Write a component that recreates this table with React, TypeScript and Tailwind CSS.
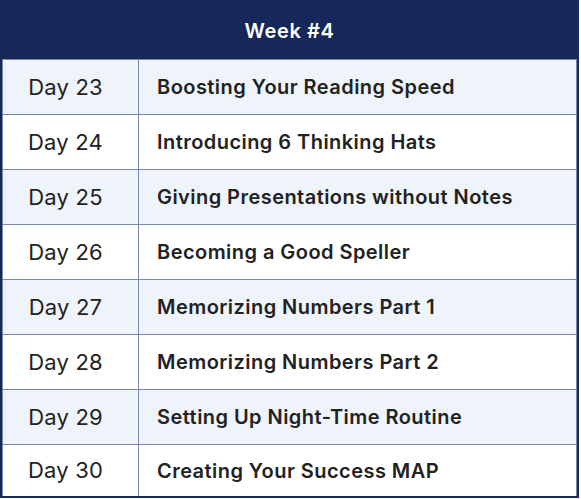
import React from "react";

const rows = [
  ["Day 23", "Boosting Your Reading Speed"],
  ["Day 24", "Introducing 6 Thinking Hats"],
  ["Day 25", "Giving Presentations without Notes"],
  ["Day 26", "Becoming a Good Speller"],
  ["Day 27", "Memorizing Numbers Part 1"],
  ["Day 28", "Memorizing Numbers Part 2"],
  ["Day 29", "Setting Up Night-Time Routine"],
  ["Day 30", "Creating Your Success MAP"],
];

export default function App() {
  return (
    <div className="w-[581px] h-[499px] bg-white" style={{ fontFamily: "Inter, 'Noto Sans', sans-serif" }}>
      <div className="w-[579px] h-[498px] border-2 border-[#16285a] bg-[#16285a] flex flex-col">
        <div className="h-[57px] shrink-0 flex items-center justify-center text-white text-[20px] font-semibold tracking-[0.6px] pt-[1px]">
          Week #4
        </div>
        <div className="flex-1 flex flex-col border-x border-[#7a89ab] bg-white">
          {rows.map(([d, t], i) => (
            <div
              key={d}
              className={`flex border-t border-[#7a89ab] text-[#222222] ${i === 7 ? "flex-1" : "h-[55px] shrink-0"} ${i % 2 === 0 ? "bg-[#eff4fb]" : "bg-white"}`}
            >
              <div className="w-[135px] flex items-center justify-center pr-[10px] text-[22px] font-normal tracking-[0.2px]">{d}</div>
              <div className="flex-1 border-l border-[#7a89ab] flex items-center pl-[18px] text-[20px] font-semibold tracking-[0.45px]">
                {t}
              </div>
            </div>
          ))}
        </div>
      </div>
    </div>
  );
}
